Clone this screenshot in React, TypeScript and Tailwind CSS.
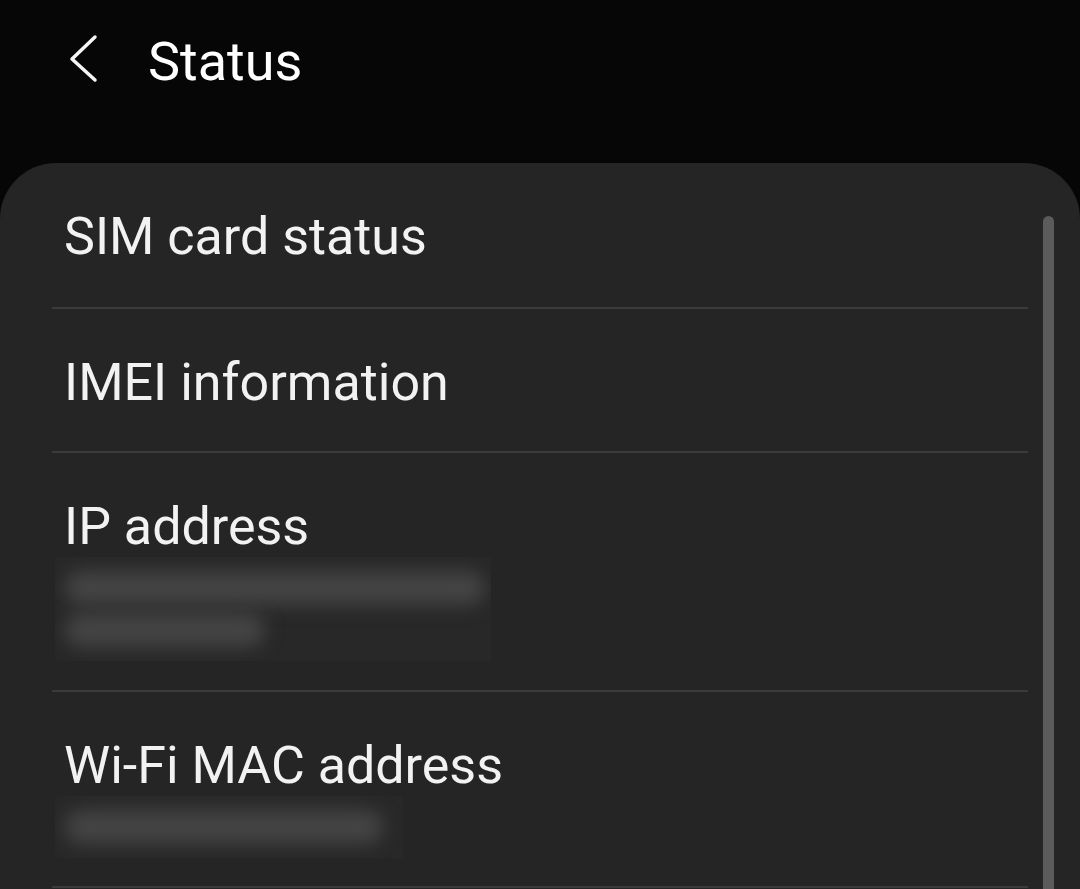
import { ReactNode } from "react";

function Blur({ lines, w }: { lines: { w: number; mt: number }[]; w: number }) {
  return (
    <div className="ml-[-9px] overflow-hidden bg-[#282828] pt-[8px] pb-[14px] pl-[10px]" style={{ width: w }}>
      {lines.map((l, i) => (
        <div
          key={i}
          className="h-[34px] rounded-full bg-[#444444] blur-[9px]"
          style={{ width: l.w, marginTop: l.mt }}
        />
      ))}
    </div>
  );
}

function Row({ title, height, children }: { title: string; height: number; children?: ReactNode }) {
  return (
    <>
      <div className="pl-[64px] pt-[44px]" style={{ height }}>
        <div className="text-[52px] leading-[60px] text-[#f2f2f2]">{title}</div>
        {children}
      </div>
      <div className="ml-[52px] h-[2px] w-[976px] bg-[#3b3b3b]" />
    </>
  );
}

export default function App() {
  return (
    <div
      className="h-[889px] w-[1080px] overflow-hidden bg-[#060606]"
      style={{ fontFamily: "Roboto, 'Noto Sans', sans-serif" }}
    >
      <div className="flex h-[163px] items-start pt-[30px]">
        <svg width="40" height="56" viewBox="0 0 40 56" className="ml-[63px] mt-[2px]">
          <polyline points="32,5 9,27 32,48" fill="none" stroke="#f5f5f5" strokeWidth="3.5" strokeLinecap="round" strokeLinejoin="round" />
        </svg>
        <div className="ml-[45px] text-[54px] leading-[64px] text-white">Status</div>
      </div>
      <div className="relative h-[726px] rounded-t-[56px] bg-[#252525]">
        <Row title="SIM card status" height={144} />
        <Row title="IMEI information" height={142} />
        <Row title="IP address" height={237}>
          <Blur w={436} lines={[{ w: 420, mt: 6 }, { w: 200, mt: 8 }]} />
        </Row>
        <Row title="Wi-Fi MAC address" height={194}>
          <Blur w={348} lines={[{ w: 318, mt: 6 }]} />
        </Row>
        <div className="absolute left-[1043px] top-[53px] h-[700px] w-[11px] rounded-full bg-[#5b5b5b]" />
      </div>
    </div>
  );
}
